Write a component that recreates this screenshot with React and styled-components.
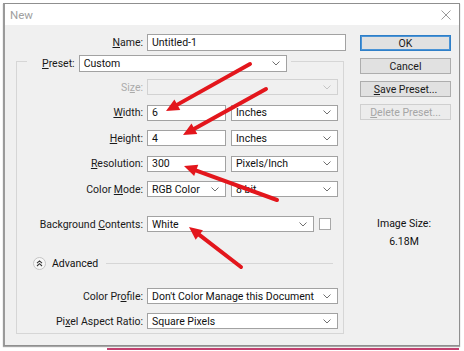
import React from "react";
import styled, { createGlobalStyle } from "styled-components";

const GlobalStyle = createGlobalStyle`
  html, body {
    margin: 0;
    padding: 0;
    background: #ffffff;
  }
  body {
    font-family: Roboto, "Noto Sans", sans-serif;
    font-size: 10.5px;
    color: #111;
  }
`;

const Page = styled.div`
  position: relative;
  width: 464px;
  height: 351px;
  box-sizing: border-box;
  padding: 3px 0 0 3px;
  overflow: hidden;
`;

const Window = styled.div`
  width: 457px;
  height: 343px;
  box-sizing: border-box;
  border: 1px solid #8f8f8f;
  border-left: 2px solid #9a9a9a;
  background: #f0f0f0;
  display: flex;
  flex-direction: column;
  box-shadow: 0 1px 1px rgba(0, 0, 0, 0.35);
`;

const BelowStrip = styled.div`
  margin: 2px 0 0 104px;
  width: 352px;
  height: 2px;
  background: #c2416f;
`;

const TitleBar = styled.div`
  height: 21px;
  background: #fff;
  display: flex;
  align-items: center;
  justify-content: space-between;
  padding: 0 8px 0 5px;
  flex-shrink: 0;
`;

const Title = styled.span`
  color: #a0a0a0;
  font-size: 11.5px;
`;

const Body = styled.div`
  flex: 1;
  display: flex;
  padding: 9px 8px 0 11px;
`;

const MainCol = styled.div`
  width: 330px;
  display: flex;
  flex-direction: column;
`;

const SideCol = styled.div`
  margin-left: 14px;
  width: 91px;
  padding-top: 1px;
  display: flex;
  flex-direction: column;
  gap: 7px;
`;

const NameRow = styled.div`
  display: grid;
  grid-template-columns: 127px 199px;
  column-gap: 4px;
  align-items: center;
`;

const Label = styled.label`
  text-align: right;
  white-space: nowrap;
  color: ${(p) => (p.$disabled ? "#ababab" : "#1a1a1a")};
  u {
    text-decoration-thickness: 1px;
    text-underline-offset: 1px;
  }
`;

const Field = styled.div`
  box-sizing: border-box;
  height: ${(p) => p.$h || 16}px;
  width: ${(p) => (p.$w ? `${p.$w}px` : "100%")};
  border: 1px solid ${(p) => (p.$disabled ? "#d2d2d2" : "#a2a2a2")};
  background: ${(p) => (p.$disabled ? "#f0f0f0" : "#fff")};
  display: flex;
  align-items: center;
  justify-content: space-between;
  padding: 0 6px 0 4px;
  white-space: nowrap;
  overflow: hidden;
  color: #111;
  flex-shrink: 0;
`;

const Group = styled.fieldset`
  margin: 0;
  width: 328px;
  box-sizing: border-box;
  border: 1px solid #d6d6d6;
  padding: 7px 5px 4px 0;
  min-width: 0;
`;

const Legend = styled.legend`
  margin-left: 10px;
  padding: 4px 4px 0 15px;
  display: flex;
  align-items: center;
  gap: 4px;
`;

const Rows = styled.div`
  display: flex;
  flex-direction: column;
`;

const Row = styled.div`
  display: grid;
  grid-template-columns: 126px 191px;
  column-gap: 4px;
  align-items: center;
  margin-top: ${(p) => p.$mt || 0}px;
`;

const Pair = styled.div`
  display: flex;
  align-items: center;
  gap: 5px;
`;

const Check = styled.div`
  width: 12px;
  height: 12px;
  box-sizing: border-box;
  border: 1px solid #a8a8a8;
  background: #fff;
`;

const AdvancedRow = styled.div`
  display: flex;
  align-items: center;
  height: 14px;
  margin: 24px 5px 0 16px;
  gap: 6px;
`;

const Rule = styled.div`
  flex: 1;
  height: 1px;
  background: #d6d6d6;
  margin-left: 2px;
`;

const Button = styled.div`
  box-sizing: border-box;
  height: 16px;
  display: flex;
  align-items: center;
  justify-content: center;
  background: ${(p) => (p.$disabled ? "#ececec" : "#e1e1e1")};
  border: 1px solid ${(p) => (p.$primary ? "#2f7fc8" : p.$disabled ? "#cfcfcf" : "#adadad")};
  box-shadow: ${(p) => (p.$primary ? "inset 0 0 0 1px #4b94d6" : "none")};
  color: ${(p) => (p.$disabled ? "#a6a6a6" : "#1a1a1a")};
  white-space: nowrap;
`;

const SizeInfo = styled.div`
  margin-top: 90px;
  display: flex;
  flex-direction: column;
  align-items: center;
  gap: 4px;
  line-height: 14px;
  padding-right: 3px;
`;

const Overlay = styled.svg`
  position: absolute;
  left: 0;
  top: 0;
  pointer-events: none;
`;

const Chevron = ({ light }) => (
  <svg width="8" height="5" viewBox="0 0 8 5">
    <polyline
      points="0.5,0.5 4,4 7.5,0.5"
      fill="none"
      stroke={light ? "#c4c4c4" : "#707070"}
      strokeWidth="1"
    />
  </svg>
);

const Select = ({ children, w, h, disabled }) => (
  <Field $w={w} $h={h} $disabled={disabled}>
    <span>{children}</span>
    <Chevron light={disabled} />
  </Field>
);

const CloseIcon = () => (
  <svg width="10" height="10" viewBox="0 0 10 10">
    <path d="M0.5 0.5 L9.5 9.5 M9.5 0.5 L0.5 9.5" stroke="#9a9a9a" strokeWidth="1" />
  </svg>
);

const AdvancedIcon = () => (
  <svg width="13" height="13" viewBox="0 0 13 13">
    <circle cx="6.5" cy="6.5" r="6" fill="#f7f7f7" stroke="#c4c4c4" />
    <path d="M4 6.2 L6.5 3.9 L9 6.2 M4 9 L6.5 6.7 L9 9" fill="none" stroke="#333" strokeWidth="1.1" />
  </svg>
);

const arrows = [
  [250, 64, 166, 111],
  [266, 89, 183, 135],
  [277, 200, 184, 166],
  [241, 267, 189, 227],
];

const Arrow = ({ x1, y1, x2, y2 }) => {
  const dx = x2 - x1;
  const dy = y2 - y1;
  const len = Math.hypot(dx, dy);
  const ux = dx / len;
  const uy = dy / len;
  const L = 13;
  const W = 6;
  const bx = x2 - ux * L;
  const by = y2 - uy * L;
  const pts = `${x2},${y2} ${bx - uy * W},${by + ux * W} ${bx + uy * W},${by - ux * W}`;
  return (
    <g>
      <line x1={x1} y1={y1} x2={bx + ux * 2} y2={by + uy * 2} stroke="#e3161c" strokeWidth="4" strokeLinecap="round" />
      <polygon points={pts} fill="#e3161c" />
    </g>
  );
};

const App = () => {
  return (
    <Page>
      <GlobalStyle />
      <Window>
        <TitleBar>
          <Title>New</Title>
          <CloseIcon />
        </TitleBar>
        <Body>
          <MainCol>
            <NameRow>
              <Label><u>N</u>ame:</Label>
              <Field $h={17}>Untitled-1</Field>
            </NameRow>
            <Group>
              <Legend>
                <Label><u>P</u>reset:</Label>
                <Select w={208} h={17}>Custom</Select>
              </Legend>
              <Rows>
                <Row>
                  <Label $disabled>Si<u>z</u>e:</Label>
                  <Select disabled> </Select>
                </Row>
                <Row $mt={9.5}>
                  <Label><u>W</u>idth:</Label>
                  <Pair>
                    <Field $w={79}>6</Field>
                    <Select w={107}>Inches</Select>
                  </Pair>
                </Row>
                <Row $mt={9.5}>
                  <Label><u>H</u>eight:</Label>
                  <Pair>
                    <Field $w={79}>4</Field>
                    <Select w={107}>Inches</Select>
                  </Pair>
                </Row>
                <Row $mt={9.5}>
                  <Label><u>R</u>esolution:</Label>
                  <Pair>
                    <Field $w={79}>300</Field>
                    <Select w={107}>Pixels/Inch</Select>
                  </Pair>
                </Row>
                <Row $mt={9.5}>
                  <Label>Color <u>M</u>ode:</Label>
                  <Pair>
                    <Select w={79}>RGB Color</Select>
                    <Select w={107}>8 bit</Select>
                  </Pair>
                </Row>
                <Row $mt={19}>
                  <Label>Background <u>C</u>ontents:</Label>
                  <Pair>
                    <Select w={167}>White</Select>
                    <Check />
                  </Pair>
                </Row>
              </Rows>
              <AdvancedRow>
                <AdvancedIcon />
                <span>Advanced</span>
                <Rule />
              </AdvancedRow>
              <Rows>
                <Row $mt={18}>
                  <Label>Color Pr<u>o</u>file:</Label>
                  <Select>Don't Color Manage this Document</Select>
                </Row>
                <Row $mt={9}>
                  <Label>Pi<u>x</u>el Aspect Ratio:</Label>
                  <Select>Square Pixels</Select>
                </Row>
              </Rows>
            </Group>
          </MainCol>
          <SideCol>
            <Button $primary>OK</Button>
            <Button>Cancel</Button>
            <Button><span><u>S</u>ave Preset...</span></Button>
            <Button $disabled><span><u>D</u>elete Preset...</span></Button>
            <SizeInfo>
              <span>Image Size:</span>
              <span>6.18M</span>
            </SizeInfo>
          </SideCol>
        </Body>
      </Window>
      <BelowStrip />
      <Overlay width="464" height="351" viewBox="0 0 464 351">
        {arrows.map(([x1, y1, x2, y2], i) => (
          <Arrow key={i} x1={x1} y1={y1} x2={x2} y2={y2} />
        ))}
      </Overlay>
    </Page>
  );
};

export default App;
